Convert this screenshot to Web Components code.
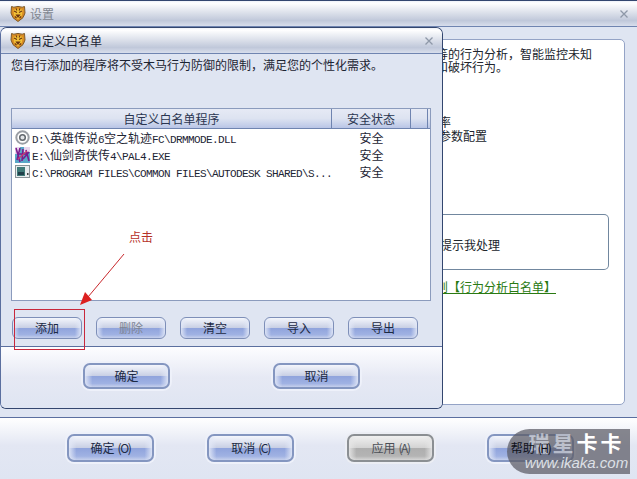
<!DOCTYPE html>
<html>
<head>
<meta charset="utf-8">
<style>
  html, body { margin: 0; padding: 0; }
  body {
    width: 637px;
    height: 479px;
    overflow: hidden;
    font: 12px "Noto Sans CJK SC", "Liberation Sans", sans-serif;
    color: #1c2433;
  }
  .m { font: 11px "Liberation Mono", monospace; letter-spacing: -.6px; }
</style>
</head>
<body>
<template id="tiger-tpl">
  <style>:host { display: block; width: 16px; height: 17px; flex: none; }</style>
  <svg width="16" height="17" viewBox="0 0 16 17">
    <path d="M1.5 1.5 Q4 2.5 5 2 Q8 .8 11 2 Q12 2.5 14.5 1.5 L15 8 Q14.5 13 8 16.5 Q1.5 13 1 8Z" fill="#d98c24" stroke="#7c5a2c" stroke-width="1"/>
    <path d="M3.5 5 Q8 2.5 12.5 5 L12 10 Q10.5 13 8 14 Q5.5 13 4 10Z" fill="#f2c136"/>
    <path d="M4 6 L7 7.5 M12 6 L9 7.5 M6.5 10 H9.5 L8 12Z M6 3.6 L7 5.5 M10 3.6 L9 5.5 M5 11.5 L6.5 13 M11 11.5 L9.5 13" stroke="#6b3410" stroke-width="1.1" fill="#6b3410"/>
  </svg>
</template>

<template id="glass-btn-tpl">
  <style>
    :host { display: block; box-sizing: border-box; border: 1px solid #7e8fb8; border-radius: 6px; text-align: center; color: #1c2a44; overflow: hidden;
      background:
        linear-gradient(90deg, rgba(226,232,247,.9), rgba(226,232,247,0) 9%, rgba(226,232,247,0) 91%, rgba(226,232,247,.9)),
        linear-gradient(180deg, #f4f6fc 0, #c9d0e5 48%, #8fa3dc 50%, #a0b2e3 84%, #c6d0ec 100%);
    }
    :host([big]) { box-shadow: 0 0 0 2px #eef1fa; border: 2px solid #8496c0; border-radius: 7px; }
    :host([off]) { color: #7d8494; }
    :host([grey]) { color: #4c5058; border: 2px solid #8b8f93; border-radius: 7px; box-shadow: 0 0 0 2px #eceef4;
      background:
        linear-gradient(90deg, rgba(230,230,230,.9), rgba(230,230,230,0) 9%, rgba(230,230,230,0) 91%, rgba(230,230,230,.9)),
        linear-gradient(180deg, #f0f0f0 0, #d4d4d4 48%, #aeaeae 50%, #b4b4b4 84%, #d6d6d6 100%);
    }
  </style>
  <slot></slot>
</template>

<template id="title-bar-tpl">
  <style>
    :host { display: flex; align-items: center; gap: 4px; box-sizing: border-box; padding: 0 8px 0 10px; font-size: 12px; color: var(--title-color, #1c2433);
      background: linear-gradient(180deg, #eef1f8 0, #ffffff 8%, #c0c8da 78%, #d8deec 100%);
      border-bottom: 1px solid #6f84b0; }
    .t { flex: 1; }
    .x { width: 10px; height: 10px; }
  </style>
  <slot name="icon"></slot>
  <span class="t"><slot></slot></span>
  <svg class="x" viewBox="0 0 10 10"><path d="M1.5 1.5 L8.5 8.5 M8.5 1.5 L1.5 8.5" stroke="#8e98a8" stroke-width="1.3"/></svg>
</template>

<template id="settings-window-tpl">
  <style>
    :host { display: flex; flex-direction: column; width: 637px; height: 479px; box-sizing: border-box; border-top: 1px solid #33466f; background: #dfe5f2; position: relative; --title-color: #80858f; }
    title-bar { height: 26px; }
    .main { flex: 1; box-sizing: border-box; padding: 12px; border-bottom: 1px solid #5b6f9f; }
    .foot { height: 61px; box-sizing: border-box; padding: 16px 0 0 67px; display: flex; gap: 53px; background: linear-gradient(180deg, #ffffff 0, #e3e7f3 45%, #dfe5f2 100%); }
    .foot glass-btn { width: 87px; height: 28px; line-height: 24px; }
    .foot .m { margin-left: 3px; letter-spacing: -1.4px; }
    .panel { box-sizing: border-box; height: 366px; margin-left: 340px; background: #fff; border: 1px solid #94a3c6; border-radius: 0 5px 5px 0; padding: 7px 15px 0 83px; line-height: 12px; color: #20242c; }
    .panel p { margin: 0; white-space: nowrap; line-height: 13px; }
    .rate { padding: 42px 0 0 3px; }
    .rate p + p { margin-top: 1px; }
    .box { box-sizing: border-box; margin: 72px 0 0 -83px; height: 56px; border: 1px solid #71879f; border-radius: 0 5px 5px 0; border-left: 0; display: flex; align-items: center; padding: 6px 0 0 87px; }
    .link { margin: 10px 0 0 -83px; color: #2a7a12; width: 203px; text-align: right; text-decoration: underline; line-height: 14px; white-space: nowrap; }
    .mark { position: absolute; left: 507px; top: 428px; width: 123px; height: 45px; border-radius: 24px 0 0 24px; background: rgba(90,90,100,.72); color: #fff; box-sizing: border-box; padding: 2px 0 0 16px; text-align: center; z-index: 1; }
    .mark b { display: block; font-size: 21px; line-height: 23px; letter-spacing: 3px; white-space: nowrap; }
    .mark b span { color: rgba(232,238,250,.6); }
    .mark i { display: block; font: italic 15px/18px "Liberation Sans", sans-serif; color: #dde0e6; white-space: nowrap; }
    .top { position: relative; z-index: 2; color: #10131c; }
  </style>
  <title-bar><tiger-logo slot="icon"></tiger-logo>设置</title-bar>
  <div class="main">
    <div class="panel">
      <p>等的行为分析，智能监控未知</p>
      <p>和破坏行为。</p>
      <div class="rate"><p>率</p><p>参数配置</p></div>
      <div class="box">提示我处理</div>
      <div class="link">则【行为分析白名单】</div>
    </div>
  </div>
  <div class="foot">
    <glass-btn big>确定<span class="m">(O)</span></glass-btn>
    <glass-btn big>取消<span class="m">(C)</span></glass-btn>
    <glass-btn grey>应用<span class="m">(A)</span></glass-btn>
    <glass-btn big><span class="top">帮助<span class="m">(H)</span></span></glass-btn>
  </div>
  <div class="mark"><b><span>瑞星</span>卡卡</b><i>www.ikaka.com</i></div>
  <slot></slot>
</template>

<template id="whitelist-dialog-tpl">
  <style>
    :host { position: absolute; left: 0; top: 26px; width: 443px; height: 382px; box-sizing: border-box; display: flex; flex-direction: column; border: 1px solid #33466f; border-left-color: #5b6f9f; border-radius: 7px 7px 6px 6px; background: #dfe5f2; overflow: hidden; --title-color: #1c2433; }
    title-bar { height: 26px; flex: none; padding-left: 9px; }
    .body { flex: 1; box-sizing: border-box; padding: 3px 11px 0 10px; border-bottom: 1px solid #5b6f9f; }
    .desc { height: 51px; line-height: 15px; white-space: nowrap; }
    .list { height: 193px; box-sizing: border-box; border: 1px solid #8b9bbd; background: #fff; }
    .btns { display: flex; gap: 14px; padding: 16px 0 0 1px; }
    .btns glass-btn { width: 70px; height: 22px; line-height: 20px; }
    .foot { height: 61px; flex: none; box-sizing: border-box; padding: 16px 0 0 82px; display: flex; gap: 103px; background: linear-gradient(180deg, #fdfdff 0, #e6e9f4 50%, #dfe5f2 100%); }
    .foot glass-btn { width: 87px; height: 26px; line-height: 22px; }
  </style>
  <title-bar><tiger-logo slot="icon"></tiger-logo>自定义白名单</title-bar>
  <div class="body">
    <div class="desc">您自行添加的程序将不受木马行为防御的限制，满足您的个性化需求。</div>
    <div class="list"><slot></slot></div>
    <div class="btns">
      <glass-btn>添加</glass-btn>
      <glass-btn off>删除</glass-btn>
      <glass-btn>清空</glass-btn>
      <glass-btn>导入</glass-btn>
      <glass-btn>导出</glass-btn>
    </div>
  </div>
  <div class="foot">
    <glass-btn big>确定</glass-btn>
    <glass-btn big>取消</glass-btn>
  </div>
</template>

<template id="list-head-tpl">
  <style>
    :host { display: grid; grid-template-columns: 320px 79px 17px 1fr; height: 20px; line-height: 19px; text-align: center; box-sizing: border-box; border-bottom: 1px solid #6f84b0; background: linear-gradient(180deg, #e6eaf5, #dde3f1 50%, #b9c5e6); color: #2a3550; }
    div { border-right: 1px solid #6f84b0; }
  </style>
  <div>自定义白名单程序</div><div>安全状态</div><div></div>
</template>

<template id="list-row-tpl">
  <style>
    :host { display: grid; grid-template-columns: 320px 79px; height: 17px; line-height: 17px; color: #1c2433; }
    .p { display: flex; align-items: center; gap: 2px; padding-left: 3px; white-space: nowrap; }
    .s { text-align: center; }
    ::slotted(svg) { flex: none; }
  </style>
  <div class="p"><slot name="icon"></slot><span><slot></slot></span></div>
  <div class="s">安全</div>
</template>

<template id="click-note-tpl">
  <style>
    :host { position: absolute; left: 0; top: 0; width: 200px; height: 360px; pointer-events: none; }
    .lbl { position: absolute; left: 129px; top: 229px; color: #b5322a; line-height: 14px; }
    .hl { position: absolute; left: 14px; top: 308px; width: 71px; height: 41px; box-sizing: border-box; border: 1px solid #c8283c; }
    svg { position: absolute; left: 0; top: 0; }
  </style>
  <span class="lbl">点击</span>
  <div class="hl"></div>
  <svg width="200" height="360"><path d="M124 253 L88 296" stroke="#c8282c" stroke-width="1" fill="none"/><path d="M80 304 L85 291 L92 299Z" fill="#dc1f1f"/></svg>
</template>

<settings-window>
  <whitelist-dialog>
    <list-head></list-head>
    <list-row>
      <svg slot="icon" width="15" height="15" viewBox="0 0 15 15"><circle cx="7.5" cy="7.5" r="6.2" fill="none" stroke="#9a9ea4" stroke-width="2"/><circle cx="7.5" cy="7.5" r="2.8" fill="#e2e4e6" stroke="#62676d" stroke-width="1.5"/></svg>
      <span class="m">D:\</span>英雄传说<span class="m">6</span>空之轨迹<span class="m">FC\DRMMODE.DLL</span>
    </list-row>
    <list-row>
      <svg slot="icon" width="15" height="16" viewBox="0 0 15 16"><rect width="15" height="16" fill="#5aa7c8"/><path d="M0 0h5v7H0zM9 0h6v5H9z" fill="#e9d6ee"/><path d="M1 1 L5 15 M5 1 L2 13 M8 2 L7 14 M11 3 L14 14 M14 5 L8 12 M2 7 H13" stroke="#7a1c8e" stroke-width="1.6"/><path d="M3 12 L12 4" stroke="#d23a6e" stroke-width="1.2"/></svg>
      <span class="m">E:\</span>仙剑奇侠传<span class="m">4\PAL4.EXE</span>
    </list-row>
    <list-row>
      <svg slot="icon" width="15" height="13" viewBox="0 0 15 13"><rect x=".5" y=".5" width="14" height="12" fill="#e8ecee" stroke="#8a9498"/><rect x="2" y="2" width="8" height="9" fill="#3f7a78"/><rect x="3" y="7" width="6" height="3" fill="#20404a"/><rect x="12" y="8" width="1.5" height="2" fill="#444"/></svg>
      <span class="m">C:\PROGRAM FILES\COMMON FILES\AUTODESK SHARED\S...</span>
    </list-row>
  </whitelist-dialog>
  <click-note></click-note>
</settings-window>

<script>
  // every element here is just a template clone, only the tag name differs
  const plain = {
    "tiger-logo": "tiger-tpl",
    "glass-btn": "glass-btn-tpl",
    "title-bar": "title-bar-tpl",
    "settings-window": "settings-window-tpl",
    "whitelist-dialog": "whitelist-dialog-tpl",
    "list-head": "list-head-tpl",
    "list-row": "list-row-tpl",
    "click-note": "click-note-tpl",
  };
  for (const tag of Object.keys(plain)) {
    const tpl = document.getElementById(plain[tag]);
    customElements.define(tag, class extends HTMLElement {
      constructor() {
        super();
        this.attachShadow({ mode: "open" }).appendChild(tpl.content.cloneNode(true));
      }
    });
  }
</script>
</body>
</html>
